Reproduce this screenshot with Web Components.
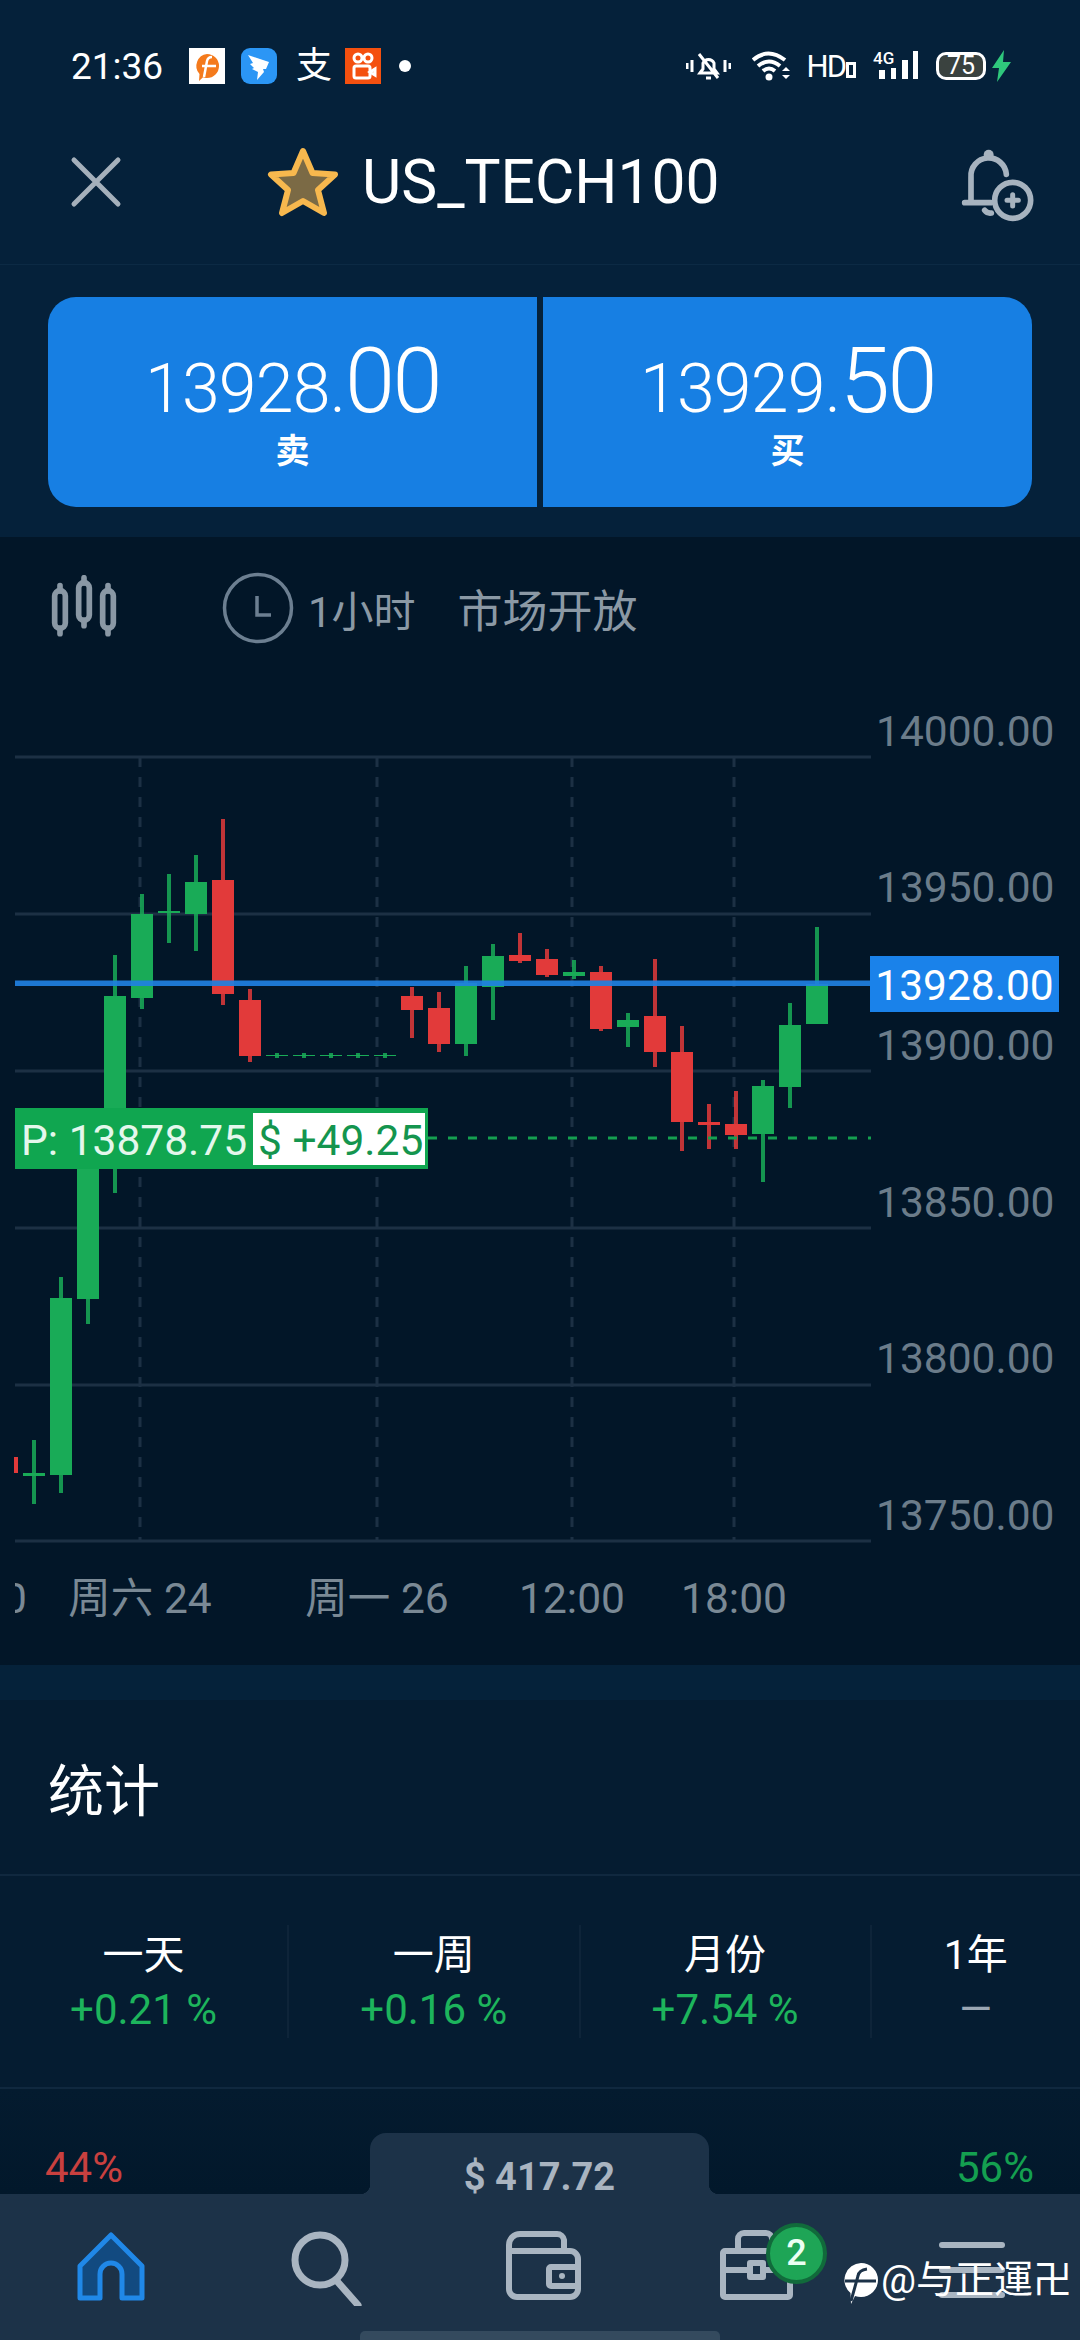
<!DOCTYPE html>
<html lang="zh">
<head>
<meta charset="utf-8">
<title>US_TECH100</title>
<style>
  html, body { margin: 0; padding: 0; background: #051c31; }
  body {
    width: 1080px;
    height: 2340px;
    overflow: hidden;
    position: relative;
    display: flex;
    flex-direction: column;
    font-family: Roboto, "Noto Sans CJK SC", sans-serif;
    color: #fff;
  }
  body > * { flex: none; }
</style>
</head>
<body>
  <status-bar></status-bar>
  <title-bar symbol="US_TECH100"></title-bar>
  <quote-panel>
    <quote-button price="13928" cents="00" label="卖" side="left"></quote-button>
    <quote-button price="13929" cents="50" label="买" side="right"></quote-button>
  </quote-panel>
  <chart-toolbar></chart-toolbar>
  <candle-chart></candle-chart>
  <stats-panel>
    <stat-cell label="一天" value="+0.21 %"></stat-cell>
    <stat-cell label="一周" value="+0.16 %"></stat-cell>
    <stat-cell label="月份" value="+7.54 %"></stat-cell>
    <stat-cell label="1年" value="—" flat></stat-cell>
  </stats-panel>
  <sentiment-row sell="44%" buy="56%" balance="$ 417.72"></sentiment-row>
  <bottom-nav></bottom-nav>
  <water-mark></water-mark>

<script>
const logoPath = 'M18 1a17 17 0 0 1 0 34c-2 0-4-.4-6-1L8 42l-.5-11A17 17 0 0 1 18 1z';

class StatusBar extends HTMLElement {
  connectedCallback() {
    this.attachShadow({ mode: 'open' }).innerHTML = `
      <style>
        :host { display: flex; align-items: center; height: 92px; padding: 20px 0 0 71px; box-sizing: content-box; background: #05213a; }
        .time { font-size: 37px; width: 118px; line-height: 1; }
        .app { width: 36px; height: 36px; flex: none; margin-right: 16px; }
        .pay { font-size: 36px; width: 49px; margin-left: 3px; line-height: 1; }
        .dot { width: 12px; height: 12px; border-radius: 50%; background: #fff; margin-left: 2px; }
        .right { margin-left: auto; display: flex; align-items: center; }
        .hd { font-size: 31px; line-height: 1; letter-spacing: -2px; margin-left: 16px; }
        .g { font-size: 17px; font-weight: 500; line-height: 1; position: absolute; top: 0; left: 0; }
        .net { position: relative; width: 62px; height: 32px; margin-left: 17px; }
        .batt { position: relative; width: 50px; height: 28px; margin-left: 2px; box-sizing: border-box; border: 3px solid #fff; border-radius: 10px; background: #3a423f; background-clip: padding-box; font-size: 25px; line-height: 22px; text-align: center; }
      </style>
      <span class="time">21:36</span>
      <svg class="app" viewBox="0 0 36 36"><rect width="36" height="36" fill="#fff"/>
        <path d="M18 6a12 12 0 0 1 0 24c-1.500 0-3-.3-4-.7L10 33l.5-7A12 12 0 0 1 18 6z" fill="#f47a1c"/>
        <path d="M15 29l3-16q1-4 5-4M13 18h14" stroke="#fff" stroke-width="2.500" fill="none"/></svg>
      <svg class="app" viewBox="0 0 36 36"><rect width="36" height="36" rx="9" fill="#2b96f5"/>
        <path d="M7 7l21 7-3 7-3 0 1 3-7 8 1-8-6-3 2-1-4-4 3-1z" fill="#fff"/></svg>
      <span class="pay">支</span>
      <svg class="app" viewBox="0 0 36 36" style="margin-right:0"><rect width="36" height="36" fill="#f4500f"/>
        <g fill="none" stroke="#fff" stroke-width="3"><circle cx="13" cy="10" r="4"/><circle cx="23" cy="10" r="4"/><rect x="9" y="18" width="16" height="12" rx="2"/><path d="M25 24l5-3v6z"/></g></svg>
      <span class="dot" style="margin-left:18px"></span>
      <div class="right">
        <svg width="45" height="30" viewBox="0 0 45 30" fill="none" stroke="#fff" stroke-width="3">
          <path d="M1 12v6M6 9v12M44 12v6M39 9v12" stroke-width="3"/>
          <path d="M14 22l3-4v-6a6 6 0 0 1 11 0v6l3 4zM13 3l19 24"/>
          <path d="M20 27h5"/>
        </svg>
        <svg width="39" height="30" viewBox="0 0 39 30" fill="none" stroke="#fff" stroke-width="4" style="margin-left:21px">
          <path d="M1 9q15-13 32 0M6 15q11-9 22 0M11 20q6-5 12 0"/><circle cx="17" cy="26" r="3.500" fill="#fff" stroke="none"/>
          <path d="M30 20l4-4 4 4zM30 24l4 4 4-4z" fill="#fff" stroke="none"/>
        </svg>
        <span class="hd">HD</span>
        <svg width="10" height="16" viewBox="0 0 10 16" style="margin-left:1px;margin-top:8px"><rect x="1.500" y="1.500" width="7" height="13" fill="none" stroke="#fff" stroke-width="3"/></svg>
        <div class="net"><span class="g">4G</span>
          <svg width="62" height="32" viewBox="0 0 62 32" fill="#fff" style="position:absolute;left:0;top:0">
            <rect x="6" y="20" width="6" height="9"/><rect x="18" y="18" width="5" height="11"/><rect x="29" y="10" width="6" height="19"/><rect x="40" y="1" width="5" height="28"/>
          </svg></div>
        <div class="batt" style="margin-left:1px">75</div>
        <svg width="19" height="32" viewBox="0 0 19 32" style="margin:0 69px 0 6px"><path d="M12 0L0 18h7l-2 14L19 12h-8z" fill="#2fc77c"/></svg>
      </div>`;
  }
}

class TitleBar extends HTMLElement {
  connectedCallback() {
    this.attachShadow({ mode: 'open' }).innerHTML = `
      <style>
        :host { display: flex; align-items: center; height: 140px; padding: 0 0 12px 70px; border-bottom: 1px solid #0c2a44; background: #05213a; }
        .close { width: 52px; height: 52px; }
        .star { margin-left: 145px; width: 72px; height: 70px; }
        .name { font-size: 60.500px; margin-left: 23px; line-height: 1; padding-top: 2px; }
        .bell { margin-left: auto; margin-right: 38px; width: 100px; height: 100px; }
      </style>
      <svg class="close" viewBox="0 0 52 52"><path d="M4 4l44 44M48 4L4 48" stroke="#a5b0bb" stroke-width="5" stroke-linecap="round"/></svg>
      <svg class="star" viewBox="0 0 72 70"><path d="M36 4l9.500 22 22.500 1.500-17 15.500 6 23L36 54 15 66l6-23L4 27.500 26.500 26z" fill="#7b6a45" stroke="#f7b84e" stroke-width="6" stroke-linejoin="round"/></svg>
      <span class="name">${this.getAttribute('symbol')}</span>
      <svg class="bell" viewBox="0 0 300 300" fill="none" stroke="#a7b3bf" stroke-width="17" stroke-linecap="round">
        <circle cx="140" cy="68" r="15" fill="#a7b3bf" stroke="none"/>
        <path d="M87 208V135a53 53 0 0 1 106 -8"/>
        <path d="M68 212h78M128 235q8 10 20 8"/>
        <circle cx="212" cy="205" r="54"/>
        <path d="M212 188v34M195 205h34" stroke-width="15"/>
      </svg>`;
  }
}

class QuotePanel extends HTMLElement {
  connectedCallback() {
    this.attachShadow({ mode: 'open' }).innerHTML = `
      <style>
        :host { display: flex; gap: 6px; height: 210px; padding: 32px 48px 30px; background: #05213a; }
      </style>
      <slot></slot>`;
  }
}

class QuoteButton extends HTMLElement {
  connectedCallback() {
    const left = this.getAttribute('side') === 'left';
    this.attachShadow({ mode: 'open' }).innerHTML = `
      <style>
        :host { flex: 1; display: flex; flex-direction: column; align-items: center; background: #177fe3; border-radius: ${left ? '28px 0 0 28px' : '0 28px 28px 0'}; }
        .price { font-weight: 300; font-size: 68px; letter-spacing: -.8px; line-height: 100px; margin-top: 35px; height: 100px; white-space: nowrap; }
        .big { font-size: 90px; letter-spacing: -2.500px; }
        .label { font-size: 34px; line-height: 40px; margin-top: -1px; font-weight: 700; }
      </style>
      <div class="price">${this.getAttribute('price')}.<span class="big">${this.getAttribute('cents')}</span></div>
      <div class="label">${this.getAttribute('label')}</div>`;
  }
}

class ChartToolbar extends HTMLElement {
  connectedCallback() {
    this.attachShadow({ mode: 'open' }).innerHTML = `
      <style>
        :host { display: flex; align-items: center; height: 142px; padding: 0 0 4px 40px; background: #021628; font-size: 45px; color: #8b99a5; }
        .period { margin-left: 14px; font-size: 42px; }
        .state { margin-left: 42px; }
      </style>
      <svg width="90" height="66" viewBox="0 0 270 198" style="flex:none">
        <g fill="none" stroke="#8a98a5" stroke-width="17" stroke-linecap="round">
          <path d="M60 32v16M60 160v16"/><rect x="44" y="47" width="32" height="113" rx="16"/>
          <path d="M132 8v16M132 136v16"/><rect x="116" y="23" width="32" height="113" rx="16"/>
          <path d="M204 32v16M204 160v16"/><rect x="188" y="47" width="32" height="113" rx="16"/>
        </g>
      </svg>
      <svg width="72" height="72" viewBox="0 0 72 72" style="margin-left:92px;flex:none" fill="none" stroke="#6c7f91" stroke-width="3.500">
        <circle cx="36" cy="36" r="33.500"/><path d="M35 24v19h14"/>
      </svg>
      <span class="period">1小时</span>
      <span class="state">市场开放</span>`;
  }
}

// [center x, body top, body bottom, wick top, wick bottom, colour] in page pixels
const CANDLES = [
  [16, 1457, 1473, 1457, 1473, 'r', 4],
  [34, 1473, 1476, 1440, 1504, 'g'],
  [61, 1298, 1475, 1277, 1493, 'g'],
  [88, 1150, 1299, 1150, 1324, 'g'],
  [115, 996, 1150, 955, 1193, 'g'],
  [142, 914, 998, 894, 1009, 'g'],
  [169, 911, 913, 874, 943, 'g'],
  [196, 882, 914, 855, 951, 'g'],
  [223, 880, 994, 819, 1005, 'r'],
  [250, 1000, 1056, 989, 1062, 'r'],
  [277, 1055, 1056, 1053, 1058, 'g'],
  [304, 1055, 1056, 1053, 1058, 'g'],
  [331, 1055, 1056, 1053, 1058, 'g'],
  [358, 1055, 1056, 1053, 1058, 'g'],
  [385, 1055, 1056, 1053, 1058, 'g'],
  [412, 996, 1010, 987, 1038, 'r'],
  [439, 1008, 1044, 992, 1052, 'r'],
  [466, 983, 1044, 966, 1056, 'g'],
  [493, 956, 987, 944, 1020, 'g'],
  [520, 955, 961, 933, 963, 'r'],
  [547, 959, 975, 949, 977, 'r'],
  [574, 972, 976, 960, 979, 'g'],
  [601, 972, 1029, 966, 1031, 'r'],
  [628, 1020, 1027, 1013, 1047, 'g'],
  [655, 1016, 1052, 959, 1067, 'r'],
  [682, 1052, 1122, 1026, 1151, 'r'],
  [709, 1122, 1125, 1104, 1149, 'r'],
  [736, 1124, 1135, 1091, 1149, 'r'],
  [763, 1086, 1134, 1080, 1182, 'g'],
  [790, 1025, 1087, 1003, 1108, 'g'],
  [817, 984, 1024, 927, 984, 'g']
];

const CHART_TOP = 683;

class CandleChart extends HTMLElement {
  connectedCallback() {
    const fill = { g: '#19ab57', r: '#e23a3a' };
    const grid = [757, 914, 1071, 1228, 1385, 1541];
    const stems = [140, 377, 572, 734];

    const lines = grid.map(y => `<path d="M15 ${y}H871"/>`).join('');
    const dashes = stems.map(x => `<path d="M${x} 757V1541" stroke-dasharray="10 10"/>`).join('');
    const bars = CANDLES.map(([x, top, bottom, high, low, c, w]) => {
      const bw = w || 22;
      return `<rect x="${x - 2}" y="${high}" width="${w || 4}" height="${low - high}" fill="${fill[c]}" opacity="${w ? 1 : .85}"/>` +
        `<rect x="${x - bw / 2}" y="${top}" width="${bw}" height="${bottom - top}" fill="${fill[c]}"/>`;
    }).join('');

    const yLabels = [
      ['14000.00', 731], ['13950.00', 887], ['13900.00', 1045],
      ['13850.00', 1202], ['13800.00', 1358], ['13750.00', 1515]
    ].map(([t, y]) => `<div class="ylab" style="top:${y - CHART_TOP - 24}px">${t}</div>`).join('');

    const xLabels = [['周六 24', 125], ['周一 26', 362], ['12:00', 557], ['18:00', 719]]
      .map(([t, x]) => `<div class="xlab" style="left:${x}px">${t}</div>`).join('');

    this.attachShadow({ mode: 'open' }).innerHTML = `
      <style>
        :host { display: block; position: relative; height: 982px; background: #021628; overflow: hidden; font-size: 42.500px; }
        svg { position: absolute; left: 0; top: 0; }
        .ylab { position: absolute; left: 876px; line-height: 50px; color: #6b7c8a; white-space: nowrap; }
        .xaxis { position: absolute; left: 15px; right: 0; top: ${1574 - CHART_TOP}px; height: 50px; overflow: hidden; }
        .xlab { position: absolute; top: 0; line-height: 50px; color: #7a8995; transform: translateX(-50%); white-space: nowrap; }
        .tag { position: absolute; left: 870px; top: ${956 - CHART_TOP}px; width: 189px; height: 56px; line-height: 59px; background: #1a82ea; text-align: center; }
        .pos { position: absolute; left: 15px; top: ${1108 - CHART_TOP}px; width: 413px; height: 61px; box-sizing: border-box; background: #10a650; display: flex; align-items: center; padding-left: 6px; color: #e4f7ec; }
        .pos span { padding-top: 3px; }
        .pos b { font-weight: 400; margin-left: 6px; width: 172px; height: 52px; line-height: 56px; background: #fff; color: #14954e; padding-left: 5px; box-sizing: border-box; white-space: nowrap; }
      </style>
      <svg width="1080" height="982" viewBox="0 ${CHART_TOP} 1080 982">
        <g stroke="#1c3044" stroke-width="3" fill="none">${lines}${dashes}</g>
        ${bars}
        <path d="M428 1138H871" stroke="#14a050" stroke-width="3" stroke-dasharray="9 11" fill="none"/>
        <rect x="15" y="980.500" width="856" height="5.500" fill="#1f80e1" opacity=".92"/>
      </svg>
      ${yLabels}
      <div class="xaxis">
        <div class="xlab" style="left:0">0</div>
        ${xLabels}
      </div>
      <div class="tag">13928.00</div>
      <div class="pos"><span>P: 13878.75</span><b>$ +49.25</b></div>`;
  }
}

class StatsPanel extends HTMLElement {
  connectedCallback() {
    this.attachShadow({ mode: 'open' }).innerHTML = `
      <style>
        :host { display: block; background: #051c31; border-top: 35px solid #05223a; }
        h2 { margin: 0; font-weight: 400; font-size: 56px; line-height: 60px; padding: 62px 0 52px 48px; border-bottom: 2px solid #10283f; height: 60px; }
        .row { display: grid; grid-template-columns: 289px 291.500px 291px 208.500px; align-items: center; height: 211px; border-bottom: 2px solid #10283f; }
      </style>
      <h2>统计</h2>
      <div class="row"><slot></slot></div>`;
  }
}

class StatCell extends HTMLElement {
  connectedCallback() {
    const flat = this.hasAttribute('flat');
    this.attachShadow({ mode: 'open' }).innerHTML = `
      <style>
        :host { display: flex; flex-direction: column; align-items: center; justify-content: center; height: 113px; border-right: 2px solid #0e2439; }
        :host(:last-child) { border-right: 0; }
        .label { font-size: 41px; line-height: 54px; }
        .value { font-size: 42px; line-height: 50px; color: ${flat ? '#9aa6b3' : '#1db45c'}; white-space: nowrap; margin-top: 3px; }
      </style>
      <div class="label">${this.getAttribute('label')}</div>
      <div class="value">${this.getAttribute('value')}</div>`;
  }
}

class SentimentRow extends HTMLElement {
  connectedCallback() {
    this.attachShadow({ mode: 'open' }).innerHTML = `
      <style>
        :host { display: grid; grid-template-columns: 370px 339px 1fr; height: 105px; background: linear-gradient(#041b2f, #02182b); font-size: 42px; }
        .sell, .buy { align-self: end; line-height: 50px; height: 51px; }
        .sell { color: #c9403f; padding-left: 45px; }
        .buy { color: #14a050; text-align: right; padding-right: 46px; }
        .tab { position: relative; align-self: end; height: 61px; background: #1c3248; border-radius: 16px 16px 0 0; text-align: center; font-weight: 700; font-size: 38px; line-height: 88px; color: #a9b4c0; overflow: visible; }
        .tab::before, .tab::after { content: ""; position: absolute; bottom: 0; width: 10px; height: 10px; }
        .tab::before { left: -10px; background: radial-gradient(circle at 0 0, transparent 10px, #1c3248 10.500px); }
        .tab::after { right: -10px; background: radial-gradient(circle at 100% 0, transparent 10px, #1c3248 10.500px); }
      </style>
      <div class="sell">${this.getAttribute('sell')}</div>
      <div class="tab">${this.getAttribute('balance')}</div>
      <div class="buy">${this.getAttribute('buy')}</div>`;
  }
}

class BottomNav extends HTMLElement {
  connectedCallback() {
    this.attachShadow({ mode: 'open' }).innerHTML = `
      <style>
        :host { display: flex; flex-direction: column; align-items: center; height: 146px; background: #1c3248; }
        .icons { display: grid; grid-template-columns: repeat(5, 216px); height: 76px; margin-top: 36px; justify-items: center; align-items: center; }
        .item { position: relative; width: 80px; height: 76px; }
        svg { display: block; }
        .badge { position: absolute; left: 50px; top: -7px; width: 61px; height: 61px; box-sizing: border-box; border-radius: 50%; background: #1ea556; border: 4px solid #116a3b; font-size: 36px; font-weight: 500; line-height: 53px; text-align: center; color: #eafff3; }
        .bar { width: 66px; height: 6px; border-radius: 3px; background: #a9b5c1; margin: 0 auto 19px; }
        .home { width: 360px; height: 9px; margin-top: 25px; background: #344a5e; border-radius: 5px 5px 0 0; }
      </style>
      <div class="icons">
        <div class="item"><svg width="80" height="76" viewBox="0 0 80 76" style="margin-left:3px">
          <path d="M40 5L71 36V68H51V44a11 11 0 0 0-22 0V68H9V36Z" fill="#124a80" stroke="#2088e8" stroke-width="5" stroke-linejoin="round"/>
        </svg></div>
        <div class="item"><svg width="80" height="76" viewBox="0 0 80 76" fill="none" stroke="#a9b5c1" stroke-width="7" stroke-linecap="round">
          <circle cx="36" cy="30" r="25"/><path d="M52 50l22 25"/>
        </svg></div>
        <div class="item"><svg width="80" height="76" viewBox="0 0 80 76" fill="none" stroke="#a9b5c1" stroke-width="6" style="margin-left:4px">
          <path d="M60 21V10a7 7 0 0 0-7-6H16a11 11 0 0 0-11 11V59a8 8 0 0 0 8 8H66a8 8 0 0 0 8-8V29a8 8 0 0 0-8-8H5"/>
          <rect x="45" y="37" width="29" height="19" rx="2" fill="#1c3248"/><circle cx="58" cy="46" r="3" fill="#a9b5c1" stroke="none"/>
        </svg></div>
        <div class="item"><svg width="80" height="76" viewBox="0 0 80 76" fill="none" stroke="#a9b5c1" stroke-width="6" stroke-linejoin="round">
          <rect x="7" y="21" width="67" height="46" rx="2"/><path d="M22 21V9a6 6 0 0 1 6-6H50a6 6 0 0 1 6 6V21"/>
          <path d="M7 40H32M50 40H74"/><rect x="34" y="33" width="13" height="14" fill="#1c3248"/>
        </svg><div class="badge">2</div></div>
        <div class="item"><div style="height:12px"></div><div class="bar"></div><div class="bar"></div><div class="bar"></div></div>
      </div>
      <div class="home"></div>`;
  }
}

// the site watermark stamped over the corner of the screenshot
class WaterMark extends HTMLElement {
  connectedCallback() {
    this.attachShadow({ mode: 'open' }).innerHTML = `
      <style>
        :host { position: absolute; left: 843px; top: 2252px; display: flex; align-items: center; font-size: 39px; line-height: 46px; color: #fff; white-space: nowrap; }
        svg { margin-right: 2px; margin-top: 10px; }
      </style>
      <svg width="36" height="46" viewBox="0 0 36 46">
        <path d="${logoPath}" fill="#fff"/>
        <path d="M8 39L15 14q1-6 9-7M2 19H33" stroke="#1c3248" stroke-width="3" fill="none"/>
      </svg>
      <span>@与正運卍</span>`;
  }
}

customElements.define('status-bar', StatusBar);
customElements.define('title-bar', TitleBar);
customElements.define('quote-panel', QuotePanel);
customElements.define('quote-button', QuoteButton);
customElements.define('chart-toolbar', ChartToolbar);
customElements.define('candle-chart', CandleChart);
customElements.define('stats-panel', StatsPanel);
customElements.define('stat-cell', StatCell);
customElements.define('sentiment-row', SentimentRow);
customElements.define('bottom-nav', BottomNav);
customElements.define('water-mark', WaterMark);
</script>
</body>
</html>
